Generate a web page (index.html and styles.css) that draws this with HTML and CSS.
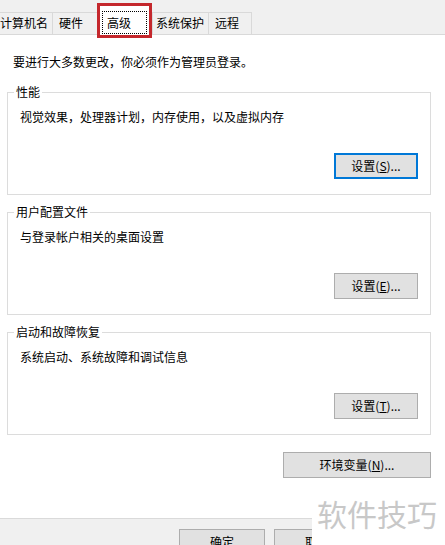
FILE: index.html
```html
<!DOCTYPE html>
<html lang="zh-CN">
<head>
<meta charset="utf-8">
<title>系统属性 - 高级</title>
<link rel="stylesheet" href="styles.css">
</head>
<body>
  <div class="tabs">
    <div class="tab tab-1">计算机名</div>
    <div class="tab tab-2">硬件</div>
    <div class="tab tab-active"><span class="focus">高级</span></div>
    <div class="tab tab-4">系统保护</div>
    <div class="tab tab-5">远程</div>
  </div>
  <div class="page">
    <p class="note">要进行大多数更改，你必须作为管理员登录。</p>
    <fieldset class="group">
      <legend>性能</legend>
      <div class="group-body">
        <p class="desc">视觉效果，处理器计划，内存使用，以及虚拟内存</p>
        <button class="btn btn-focus">设置(<u>S</u>)...</button>
      </div>
    </fieldset>
    <fieldset class="group">
      <legend>用户配置文件</legend>
      <div class="group-body">
        <p class="desc">与登录帐户相关的桌面设置</p>
        <button class="btn">设置(<u>E</u>)...</button>
      </div>
    </fieldset>
    <fieldset class="group">
      <legend>启动和故障恢复</legend>
      <div class="group-body">
        <p class="desc">系统启动、系统故障和调试信息</p>
        <button class="btn">设置(<u>T</u>)...</button>
      </div>
    </fieldset>
    <button class="btn btn-env">环境变量(<u>N</u>)...</button>
  </div>
  <div class="footer">
    <button class="btn btn-foot">确定</button>
    <button class="btn btn-foot">取消</button>
  </div>
  <div class="watermark">软件技巧</div>
</body>
</html>
```

FILE: styles.css
```css
* { box-sizing: border-box; }
html, body { height: 100%; }
body {
  margin: 0;
  background: #f0f0f0;
  font-family: "Noto Sans CJK SC", "Microsoft YaHei", sans-serif;
  font-size: 12px;
  line-height: 16px;
  color: #000;
  display: flex;
  flex-direction: column;
  overflow: hidden;
}

.tabs {
  height: 34px;
  flex: none;
  display: flex;
  align-items: flex-end;
  position: relative;
  z-index: 1;
}
.tab {
  height: 22px;
  line-height: 20px;
  border: 1px solid #d9d9d9;
  border-right: none;
  border-bottom: none;
  background: #f0f0f0;
  white-space: nowrap;
  padding-left: 6px;
}
.tab-1 { width: 59px; margin-left: -7px; }
.tab-2 { width: 45px; }
.tab-4 { width: 56px; padding-left: 3px; }
.tab-5 { width: 44px; padding-left: 6px; border-right: 1px solid #d9d9d9; }
.tab-active {
  width: 55px;
  height: 35px;
  margin-bottom: -4px;
  background: #fff;
  border: 3px solid #c4272c;
  padding: 5px 2px 0 2px;
}
.focus {
  display: block;
  height: 23px;
  line-height: 21px;
  border: 1px dotted #000;
  padding-left: 4px;
}

.page {
  flex: 1;
  background: #fff;
  border-top: 1px solid #d9d9d9;
  padding: 19px 14px 0 7px;
  display: flex;
  flex-direction: column;
}
.note {
  margin: 0 0 15px 6px;
}
.group {
  margin: 0 0 10px 0;
  padding: 0;
  border: 1px solid #dcdcdc;
  min-width: 0;
}
.group legend {
  margin-left: 6px;
  padding: 0 2px;
  line-height: 14px;
  font-size: 12px;
}
.group-body {
  padding: 10px 12px 15px 12px;
  display: flex;
  flex-direction: column;
  align-items: flex-start;
}
.desc { margin: 0; }

.btn {
  font-family: inherit;
  font-size: 12px;
  line-height: 16px;
  color: #000;
  background: #e1e1e1;
  border: 1px solid #adadad;
  border-radius: 0;
  height: 26px;
  padding: 0;
  text-align: center;
}
.btn u { text-underline-offset: 1px; }
.group .btn {
  width: 84px;
  margin-top: 28px;
  align-self: flex-end;
}
.btn-focus { border: 2px solid #0078d7; }
.btn-env {
  width: 148px;
  margin-top: 7px;
  align-self: flex-end;
}

.footer {
  height: 27px;
  flex: none;
  border-top: 1px solid #dadada;
  padding: 10px 0 0 179px;
  display: flex;
  gap: 9px;
  align-items: flex-start;
}
.btn-foot {
  width: 86px;
  flex: none;
}

.watermark {
  position: absolute;
  right: 0;
  bottom: 0;
  width: 133px;
  height: 66px;
  background: #fff;
  color: #c8c8c8;
  font-size: 30px;
  line-height: 30px;
  padding: 19px 0 0 5px;
  white-space: nowrap;
  z-index: 2;
}
```
